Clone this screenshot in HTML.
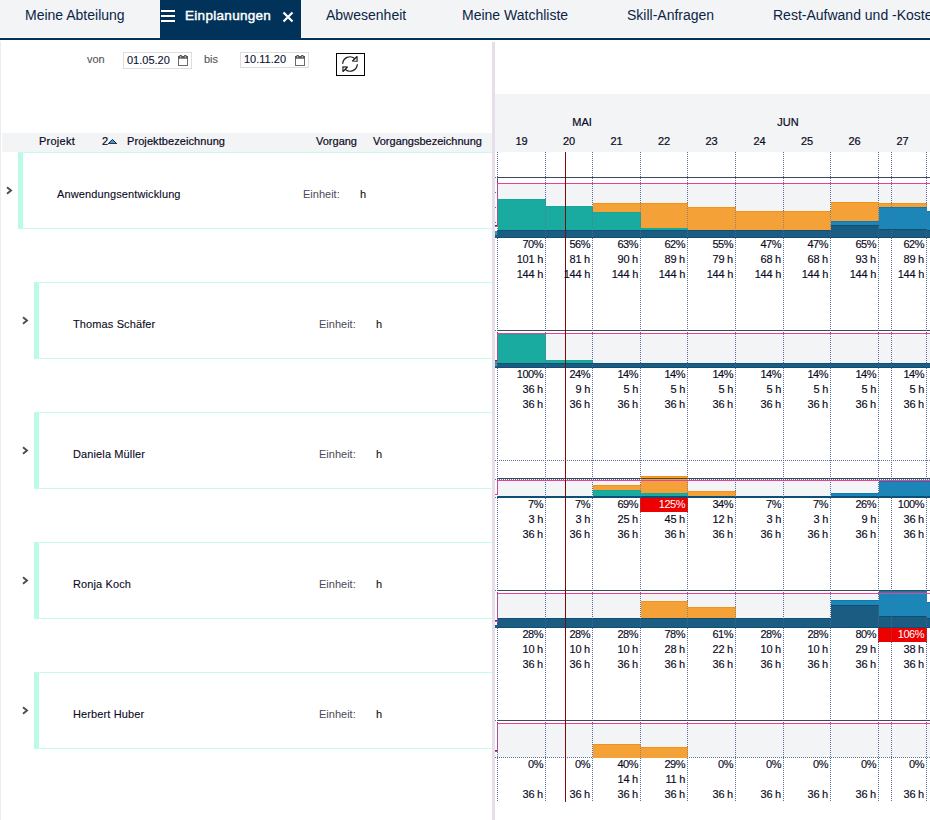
<!DOCTYPE html>
<html lang="de"><head><meta charset="utf-8"><title>Einplanungen</title>
<style>
html,body{margin:0;padding:0;}
body{width:930px;height:820px;overflow:hidden;background:#fff;position:relative;font-family:"Liberation Sans",Arial,sans-serif;font-size:11px;color:#1a1a2e;}
.abs{position:absolute;}
.tab{position:absolute;top:0;height:38px;line-height:31px;font-size:14px;color:#0b2545;white-space:nowrap;}
.t{position:absolute;white-space:nowrap;line-height:15px;height:15px;color:#0a0a1e;-webkit-text-stroke:0.1px;}
.num{position:absolute;text-align:right;white-space:nowrap;line-height:15px;height:15px;width:46px;color:#0a0a1e;letter-spacing:-0.25px;-webkit-text-stroke:0.15px;}
.hd{position:absolute;white-space:nowrap;line-height:15px;color:#0a0a1e;-webkit-text-stroke:0.2px;}
</style></head><body>

<div class="abs" style="left:0;top:0;width:930px;height:37px;background:#f3f4f6"></div>
<div class="abs" style="left:0;top:38px;width:930px;height:2px;background:#00325a"></div>
<div class="abs" style="left:160px;top:0;width:141px;height:40px;background:#00325a"></div>
<div class="tab" style="left:25px">Meine Abteilung</div>
<div class="abs" style="left:161px;top:10px;width:14px;height:2px;background:#fff"></div>
<div class="abs" style="left:161px;top:15px;width:14px;height:2px;background:#fff"></div>
<div class="abs" style="left:161px;top:20px;width:14px;height:2px;background:#fff"></div>
<div class="tab" style="left:185px;color:#fff;font-size:13.5px;-webkit-text-stroke:0.45px #fff;letter-spacing:0.3px;">Einplanungen</div>
<svg class="abs" style="left:282px;top:11px" width="12" height="12" viewBox="0 0 12 12"><path d="M1.5 1.5 L10.5 10.5 M10.5 1.5 L1.5 10.5" stroke="#fff" stroke-width="2.2" fill="none"/></svg>
<div class="tab" style="left:326px">Abwesenheit</div>
<div class="tab" style="left:462px">Meine Watchliste</div>
<div class="tab" style="left:627px">Skill-Anfragen</div>
<div class="tab" style="left:773px">Rest-Aufwand und -Kosten</div>
<div class="abs" style="left:0;top:41px;width:1px;height:779px;background:#ededed"></div>
<div class="t" style="left:87px;top:52px;color:#555">von</div>
<div class="abs" style="left:123px;top:52px;width:67px;height:15px;border:1px solid #ddd;background:#fff"></div>
<div class="t" style="left:127px;top:53px;color:#0b1030">01.05.20</div>
<div class="t" style="left:204px;top:52px;color:#555">bis</div>
<div class="abs" style="left:240px;top:52px;width:67px;height:14px;border:1px solid #ddd;background:#fff"></div>
<div class="t" style="left:244px;top:52px;color:#0b1030">10.11.20</div>
<svg class="abs" style="left:178px;top:55px" width="11" height="11" viewBox="0 0 11 11"><rect x="0.5" y="1.5" width="9" height="9" fill="#fff" stroke="#6a6a6a" stroke-width="1"/><rect x="0" y="1" width="10" height="2.7" fill="#555"/><rect x="1.4" y="0" width="2.6" height="1.4" rx="0.6" fill="#555"/><rect x="6" y="0" width="2.6" height="1.4" rx="0.6" fill="#555"/><rect x="2.2" y="1" width="1" height="1.7" fill="#bcd"/><rect x="6.8" y="1" width="1" height="1.7" fill="#bcd"/></svg>
<svg class="abs" style="left:295px;top:55px" width="11" height="11" viewBox="0 0 11 11"><rect x="0.5" y="1.5" width="9" height="9" fill="#fff" stroke="#6a6a6a" stroke-width="1"/><rect x="0" y="1" width="10" height="2.7" fill="#555"/><rect x="1.4" y="0" width="2.6" height="1.4" rx="0.6" fill="#555"/><rect x="6" y="0" width="2.6" height="1.4" rx="0.6" fill="#555"/><rect x="2.2" y="1" width="1" height="1.7" fill="#bcd"/><rect x="6.8" y="1" width="1" height="1.7" fill="#bcd"/></svg>
<div class="abs" style="left:336px;top:53px;width:27px;height:21px;border:1px solid #000;background:#fff"></div>
<svg class="abs" style="left:342px;top:56px" width="16" height="16" viewBox="0 0 16 16" fill="none" stroke="#1c1c1c" stroke-width="1.15" stroke-linecap="round" stroke-linejoin="round"><path d="M0.7 7.4 A7.3 7.3 0 0 1 12.6 2.5"/><path d="M15.3 8.6 A7.3 7.3 0 0 1 3.4 13.5"/><path d="M15 0.5 L15.1 5.3 L10.5 5 Z" fill="#fff"/><path d="M1 15.5 L0.9 10.7 L5.5 11 Z" fill="#fff"/></svg>
<div class="abs" style="left:2px;top:133px;width:490px;height:19px;background:#f3f4f6"></div>
<div class="hd" style="left:39px;top:134px;letter-spacing:0.25px">Projekt</div>
<div class="hd" style="left:102px;top:134px;letter-spacing:0px">2</div>
<div class="hd" style="left:127px;top:134px;letter-spacing:0.08px">Projektbezeichnung</div>
<div class="hd" style="left:316px;top:134px;letter-spacing:0px">Vorgang</div>
<div class="hd" style="left:373px;top:134px;letter-spacing:0px">Vorgangsbezeichnung</div>
<svg class="abs" style="left:108px;top:139px" width="9" height="5" viewBox="0 0 9 5"><path d="M0.3 4.7 L4.5 0.4 L8.7 4.7 Z" fill="#3b9ade" stroke="#111" stroke-width="0.9"/></svg>
<div class="abs" style="left:495px;top:94px;width:435px;height:58px;background:#f3f4f6"></div>
<div class="hd" style="left:552px;top:115px;width:60px;text-align:center">MAI</div>
<div class="hd" style="left:758px;top:115px;width:60px;text-align:center">JUN</div>
<div class="hd" style="left:501.0px;top:134px;width:41px;text-align:center">19</div>
<div class="hd" style="left:548.5px;top:134px;width:41px;text-align:center">20</div>
<div class="hd" style="left:596.0px;top:134px;width:41px;text-align:center">21</div>
<div class="hd" style="left:643.5px;top:134px;width:41px;text-align:center">22</div>
<div class="hd" style="left:691.0px;top:134px;width:41px;text-align:center">23</div>
<div class="hd" style="left:739.0px;top:134px;width:41px;text-align:center">24</div>
<div class="hd" style="left:786.5px;top:134px;width:41px;text-align:center">25</div>
<div class="hd" style="left:834.0px;top:134px;width:41px;text-align:center">26</div>
<div class="hd" style="left:882.0px;top:134px;width:41px;text-align:center">27</div>
<div class="abs" style="left:492px;top:42px;width:3px;height:778px;background:#e6dfe9"></div>
<div class="abs" style="left:18px;top:152px;width:469px;height:75px;border-left:5px solid #b9fbe6;border-top:1px solid #c6fbeb;border-bottom:1px solid #c6fbeb;background:#fff"></div>
<svg class="abs" style="left:6px;top:186px" width="7" height="9" viewBox="0 0 7 9"><path d="M1 1.3 L5 4.5 L1 7.7" stroke="#4d4d4d" stroke-width="1.9" fill="none"/></svg>
<div class="t" style="left:57px;top:187px;letter-spacing:0.12px">Anwendungsentwicklung</div>
<div class="t" style="left:303px;top:187px;color:#4a4a58;-webkit-text-stroke:0">Einheit:</div>
<div class="t" style="left:360px;top:187px;color:#111">h</div>
<div class="abs" style="left:34px;top:282px;width:453px;height:75px;border-left:5px solid #b9fbe6;border-top:1px solid #c6fbeb;border-bottom:1px solid #c6fbeb;background:#fff"></div>
<svg class="abs" style="left:22px;top:316px" width="7" height="9" viewBox="0 0 7 9"><path d="M1 1.3 L5 4.5 L1 7.7" stroke="#4d4d4d" stroke-width="1.9" fill="none"/></svg>
<div class="t" style="left:73px;top:317px;letter-spacing:0.12px">Thomas Schäfer</div>
<div class="t" style="left:319px;top:317px;color:#4a4a58;-webkit-text-stroke:0">Einheit:</div>
<div class="t" style="left:376px;top:317px;color:#111">h</div>
<div class="abs" style="left:34px;top:412px;width:453px;height:75px;border-left:5px solid #b9fbe6;border-top:1px solid #c6fbeb;border-bottom:1px solid #c6fbeb;background:#fff"></div>
<svg class="abs" style="left:22px;top:446px" width="7" height="9" viewBox="0 0 7 9"><path d="M1 1.3 L5 4.5 L1 7.7" stroke="#4d4d4d" stroke-width="1.9" fill="none"/></svg>
<div class="t" style="left:73px;top:447px;letter-spacing:0.12px">Daniela Müller</div>
<div class="t" style="left:319px;top:447px;color:#4a4a58;-webkit-text-stroke:0">Einheit:</div>
<div class="t" style="left:376px;top:447px;color:#111">h</div>
<div class="abs" style="left:34px;top:542px;width:453px;height:75px;border-left:5px solid #b9fbe6;border-top:1px solid #c6fbeb;border-bottom:1px solid #c6fbeb;background:#fff"></div>
<svg class="abs" style="left:22px;top:576px" width="7" height="9" viewBox="0 0 7 9"><path d="M1 1.3 L5 4.5 L1 7.7" stroke="#4d4d4d" stroke-width="1.9" fill="none"/></svg>
<div class="t" style="left:73px;top:577px;letter-spacing:0.12px">Ronja Koch</div>
<div class="t" style="left:319px;top:577px;color:#4a4a58;-webkit-text-stroke:0">Einheit:</div>
<div class="t" style="left:376px;top:577px;color:#111">h</div>
<div class="abs" style="left:34px;top:672px;width:453px;height:75px;border-left:5px solid #b9fbe6;border-top:1px solid #c6fbeb;border-bottom:1px solid #c6fbeb;background:#fff"></div>
<svg class="abs" style="left:22px;top:706px" width="7" height="9" viewBox="0 0 7 9"><path d="M1 1.3 L5 4.5 L1 7.7" stroke="#4d4d4d" stroke-width="1.9" fill="none"/></svg>
<div class="t" style="left:73px;top:707px;letter-spacing:0.12px">Herbert Huber</div>
<div class="t" style="left:319px;top:707px;color:#4a4a58;-webkit-text-stroke:0">Einheit:</div>
<div class="t" style="left:376px;top:707px;color:#111">h</div>
<svg class="abs" style="left:0;top:0" width="930" height="820" viewBox="0 0 930 820" shape-rendering="crispEdges"><rect x="497" y="184" width="430" height="46" fill="#f3f4f6"/><rect x="497" y="334" width="433" height="29" fill="#f3f4f6"/><rect x="497" y="481" width="433" height="15" fill="#f3f4f6"/><rect x="497" y="594" width="430" height="24" fill="#f3f4f6"/><rect x="497" y="724" width="433" height="33" fill="#f3f4f6"/><path d="M495 460.5 H930 M497 479.5 H930 M495 757.5 H930" stroke="#5c6b98" stroke-width="1" stroke-dasharray="1 1" fill="none"/><path d="M497.5 152 V802 M545.5 152 V802 M592.5 152 V802 M640.5 152 V802 M687.5 152 V802 M735.5 152 V802 M783.5 152 V802 M830.5 152 V802 M878.5 152 V802 M926.5 152 V802 M891.5 152 V802" stroke="#5c6b98" stroke-width="1" stroke-dasharray="1 1" fill="none"/><rect x="498" y="199" width="48" height="31" fill="#1aaba0"/><rect x="498" y="199" width="48" height="1" fill="#18a69b"/><rect x="497" y="230" width="49" height="8" fill="#1a5c82"/><rect x="497" y="230" width="49" height="1" fill="#0f4e75"/><rect x="497" y="237" width="49" height="1" fill="#0f4e75"/><rect x="546" y="206" width="47" height="24" fill="#1aaba0"/><rect x="546" y="206" width="47" height="1" fill="#18a69b"/><rect x="546" y="230" width="47" height="8" fill="#1a5c82"/><rect x="546" y="230" width="47" height="1" fill="#0f4e75"/><rect x="546" y="237" width="47" height="1" fill="#0f4e75"/><rect x="593" y="203" width="48" height="9" fill="#f4a138"/><rect x="593" y="203" width="48" height="1" fill="#f0931d"/><rect x="593" y="212" width="48" height="18" fill="#1aaba0"/><rect x="593" y="212" width="48" height="1" fill="#18a69b"/><rect x="593" y="230" width="48" height="8" fill="#1a5c82"/><rect x="593" y="230" width="48" height="1" fill="#0f4e75"/><rect x="593" y="237" width="48" height="1" fill="#0f4e75"/><rect x="641" y="203" width="47" height="25" fill="#f4a138"/><rect x="641" y="203" width="47" height="1" fill="#f0931d"/><rect x="641" y="228" width="47" height="2" fill="#1aaba0"/><rect x="641" y="228" width="47" height="1" fill="#18a69b"/><rect x="641" y="230" width="47" height="8" fill="#1a5c82"/><rect x="641" y="230" width="47" height="1" fill="#0f4e75"/><rect x="641" y="237" width="47" height="1" fill="#0f4e75"/><rect x="688" y="207" width="48" height="23" fill="#f4a138"/><rect x="688" y="207" width="48" height="1" fill="#f0931d"/><rect x="688" y="230" width="48" height="8" fill="#1a5c82"/><rect x="688" y="230" width="48" height="1" fill="#0f4e75"/><rect x="688" y="237" width="48" height="1" fill="#0f4e75"/><rect x="736" y="211" width="48" height="19" fill="#f4a138"/><rect x="736" y="211" width="48" height="1" fill="#f0931d"/><rect x="736" y="230" width="48" height="8" fill="#1a5c82"/><rect x="736" y="230" width="48" height="1" fill="#0f4e75"/><rect x="736" y="237" width="48" height="1" fill="#0f4e75"/><rect x="784" y="211" width="47" height="19" fill="#f4a138"/><rect x="784" y="211" width="47" height="1" fill="#f0931d"/><rect x="784" y="230" width="47" height="8" fill="#1a5c82"/><rect x="784" y="230" width="47" height="1" fill="#0f4e75"/><rect x="784" y="237" width="47" height="1" fill="#0f4e75"/><rect x="831" y="202" width="48" height="19" fill="#f4a138"/><rect x="831" y="202" width="48" height="1" fill="#f0931d"/><rect x="831" y="221" width="48" height="4" fill="#1d86b8"/><rect x="831" y="221" width="48" height="1" fill="#1278ae"/><rect x="831" y="225" width="48" height="13" fill="#1a5c82"/><rect x="831" y="225" width="48" height="1" fill="#0f4e75"/><rect x="831" y="237" width="48" height="1" fill="#0f4e75"/><rect x="879" y="203" width="48" height="4" fill="#f4a138"/><rect x="879" y="203" width="48" height="1" fill="#f0931d"/><rect x="879" y="207" width="48" height="22" fill="#1d86b8"/><rect x="879" y="207" width="48" height="1" fill="#1278ae"/><rect x="879" y="229" width="48" height="9" fill="#1a5c82"/><rect x="879" y="229" width="48" height="1" fill="#0f4e75"/><rect x="879" y="237" width="48" height="1" fill="#0f4e75"/><rect x="927" y="211" width="3" height="19" fill="#1d86b8"/><rect x="927" y="211" width="3" height="1" fill="#1278ae"/><rect x="927" y="230" width="3" height="8" fill="#1a5c82"/><rect x="927" y="230" width="3" height="1" fill="#0f4e75"/><rect x="927" y="237" width="3" height="1" fill="#0f4e75"/><rect x="497" y="177" width="433" height="1" fill="#3c4854"/><rect x="497" y="183" width="433" height="1" fill="#ec3f97"/><rect x="498" y="334" width="48" height="29" fill="#1aaba0"/><rect x="498" y="334" width="48" height="1" fill="#18a69b"/><rect x="497" y="363" width="49" height="5" fill="#1a5c82"/><rect x="497" y="363" width="49" height="1" fill="#0f4e75"/><rect x="497" y="367" width="49" height="1" fill="#0f4e75"/><rect x="546" y="360" width="47" height="3" fill="#1aaba0"/><rect x="546" y="360" width="47" height="1" fill="#18a69b"/><rect x="546" y="363" width="47" height="5" fill="#1a5c82"/><rect x="546" y="363" width="47" height="1" fill="#0f4e75"/><rect x="546" y="367" width="47" height="1" fill="#0f4e75"/><rect x="593" y="363" width="48" height="5" fill="#1a5c82"/><rect x="593" y="363" width="48" height="1" fill="#0f4e75"/><rect x="593" y="367" width="48" height="1" fill="#0f4e75"/><rect x="641" y="363" width="47" height="5" fill="#1a5c82"/><rect x="641" y="363" width="47" height="1" fill="#0f4e75"/><rect x="641" y="367" width="47" height="1" fill="#0f4e75"/><rect x="688" y="363" width="48" height="5" fill="#1a5c82"/><rect x="688" y="363" width="48" height="1" fill="#0f4e75"/><rect x="688" y="367" width="48" height="1" fill="#0f4e75"/><rect x="736" y="363" width="48" height="5" fill="#1a5c82"/><rect x="736" y="363" width="48" height="1" fill="#0f4e75"/><rect x="736" y="367" width="48" height="1" fill="#0f4e75"/><rect x="784" y="363" width="47" height="5" fill="#1a5c82"/><rect x="784" y="363" width="47" height="1" fill="#0f4e75"/><rect x="784" y="367" width="47" height="1" fill="#0f4e75"/><rect x="831" y="363" width="48" height="5" fill="#1a5c82"/><rect x="831" y="363" width="48" height="1" fill="#0f4e75"/><rect x="831" y="367" width="48" height="1" fill="#0f4e75"/><rect x="879" y="363" width="48" height="5" fill="#1a5c82"/><rect x="879" y="363" width="48" height="1" fill="#0f4e75"/><rect x="879" y="367" width="48" height="1" fill="#0f4e75"/><rect x="927" y="363" width="3" height="5" fill="#1a5c82"/><rect x="927" y="363" width="3" height="1" fill="#0f4e75"/><rect x="927" y="367" width="3" height="1" fill="#0f4e75"/><rect x="497" y="330" width="433" height="1" fill="#3c4854"/><rect x="497" y="333" width="433" height="1" fill="#ec3f97"/><rect x="497" y="496" width="49" height="2" fill="#1a5c82"/><rect x="497" y="496" width="49" height="1" fill="#0f4e75"/><rect x="497" y="497" width="49" height="1" fill="#0f4e75"/><rect x="546" y="496" width="47" height="2" fill="#1a5c82"/><rect x="546" y="496" width="47" height="1" fill="#0f4e75"/><rect x="546" y="497" width="47" height="1" fill="#0f4e75"/><rect x="593" y="485" width="48" height="5" fill="#f4a138"/><rect x="593" y="485" width="48" height="1" fill="#f0931d"/><rect x="593" y="490" width="48" height="6" fill="#1aaba0"/><rect x="593" y="490" width="48" height="1" fill="#18a69b"/><rect x="593" y="496" width="48" height="2" fill="#1a5c82"/><rect x="593" y="496" width="48" height="1" fill="#0f4e75"/><rect x="593" y="497" width="48" height="1" fill="#0f4e75"/><rect x="641" y="476" width="47" height="17" fill="#f4a138"/><rect x="641" y="476" width="47" height="1" fill="#f0931d"/><rect x="641" y="493" width="47" height="3" fill="#1aaba0"/><rect x="641" y="493" width="47" height="1" fill="#18a69b"/><rect x="641" y="496" width="47" height="2" fill="#1a5c82"/><rect x="641" y="496" width="47" height="1" fill="#0f4e75"/><rect x="641" y="497" width="47" height="1" fill="#0f4e75"/><rect x="688" y="491" width="48" height="5" fill="#f4a138"/><rect x="688" y="491" width="48" height="1" fill="#f0931d"/><rect x="688" y="496" width="48" height="2" fill="#1a5c82"/><rect x="688" y="496" width="48" height="1" fill="#0f4e75"/><rect x="688" y="497" width="48" height="1" fill="#0f4e75"/><rect x="736" y="496" width="48" height="2" fill="#1a5c82"/><rect x="736" y="496" width="48" height="1" fill="#0f4e75"/><rect x="736" y="497" width="48" height="1" fill="#0f4e75"/><rect x="784" y="496" width="47" height="2" fill="#1a5c82"/><rect x="784" y="496" width="47" height="1" fill="#0f4e75"/><rect x="784" y="497" width="47" height="1" fill="#0f4e75"/><rect x="831" y="493" width="48" height="3" fill="#1d86b8"/><rect x="831" y="493" width="48" height="1" fill="#1278ae"/><rect x="831" y="496" width="48" height="2" fill="#1a5c82"/><rect x="831" y="496" width="48" height="1" fill="#0f4e75"/><rect x="831" y="497" width="48" height="1" fill="#0f4e75"/><rect x="879" y="481" width="48" height="15" fill="#1d86b8"/><rect x="879" y="481" width="48" height="1" fill="#1278ae"/><rect x="879" y="496" width="48" height="2" fill="#1a5c82"/><rect x="879" y="496" width="48" height="1" fill="#0f4e75"/><rect x="879" y="497" width="48" height="1" fill="#0f4e75"/><rect x="927" y="481" width="3" height="15" fill="#1d86b8"/><rect x="927" y="481" width="3" height="1" fill="#1278ae"/><rect x="927" y="496" width="3" height="2" fill="#1a5c82"/><rect x="927" y="496" width="3" height="1" fill="#0f4e75"/><rect x="927" y="497" width="3" height="1" fill="#0f4e75"/><rect x="497" y="478" width="433" height="1" fill="#3c4854"/><rect x="497" y="480" width="433" height="1" fill="#ec3f97"/><rect x="640" y="498" width="48" height="14" fill="#ec0000"/><rect x="497" y="618" width="49" height="10" fill="#1a5c82"/><rect x="497" y="618" width="49" height="1" fill="#0f4e75"/><rect x="497" y="627" width="49" height="1" fill="#0f4e75"/><rect x="546" y="618" width="47" height="10" fill="#1a5c82"/><rect x="546" y="618" width="47" height="1" fill="#0f4e75"/><rect x="546" y="627" width="47" height="1" fill="#0f4e75"/><rect x="593" y="618" width="48" height="10" fill="#1a5c82"/><rect x="593" y="618" width="48" height="1" fill="#0f4e75"/><rect x="593" y="627" width="48" height="1" fill="#0f4e75"/><rect x="641" y="601" width="47" height="17" fill="#f4a138"/><rect x="641" y="601" width="47" height="1" fill="#f0931d"/><rect x="641" y="618" width="47" height="10" fill="#1a5c82"/><rect x="641" y="618" width="47" height="1" fill="#0f4e75"/><rect x="641" y="627" width="47" height="1" fill="#0f4e75"/><rect x="688" y="607" width="48" height="11" fill="#f4a138"/><rect x="688" y="607" width="48" height="1" fill="#f0931d"/><rect x="688" y="618" width="48" height="10" fill="#1a5c82"/><rect x="688" y="618" width="48" height="1" fill="#0f4e75"/><rect x="688" y="627" width="48" height="1" fill="#0f4e75"/><rect x="736" y="618" width="48" height="10" fill="#1a5c82"/><rect x="736" y="618" width="48" height="1" fill="#0f4e75"/><rect x="736" y="627" width="48" height="1" fill="#0f4e75"/><rect x="784" y="618" width="47" height="10" fill="#1a5c82"/><rect x="784" y="618" width="47" height="1" fill="#0f4e75"/><rect x="784" y="627" width="47" height="1" fill="#0f4e75"/><rect x="831" y="600" width="48" height="5" fill="#1d86b8"/><rect x="831" y="600" width="48" height="1" fill="#1278ae"/><rect x="831" y="605" width="48" height="23" fill="#1a5c82"/><rect x="831" y="605" width="48" height="1" fill="#0f4e75"/><rect x="831" y="627" width="48" height="1" fill="#0f4e75"/><rect x="879" y="591" width="48" height="25" fill="#1d86b8"/><rect x="879" y="591" width="48" height="1" fill="#1278ae"/><rect x="879" y="616" width="48" height="12" fill="#1a5c82"/><rect x="879" y="616" width="48" height="1" fill="#0f4e75"/><rect x="879" y="627" width="48" height="1" fill="#0f4e75"/><rect x="927" y="602" width="3" height="16" fill="#1d86b8"/><rect x="927" y="602" width="3" height="1" fill="#1278ae"/><rect x="927" y="618" width="3" height="10" fill="#1a5c82"/><rect x="927" y="618" width="3" height="1" fill="#0f4e75"/><rect x="927" y="627" width="3" height="1" fill="#0f4e75"/><rect x="497" y="590" width="433" height="1" fill="#3c4854"/><rect x="497" y="593" width="433" height="1" fill="#ec3f97"/><rect x="878" y="628" width="49" height="14" fill="#ec0000"/><rect x="593" y="744" width="48" height="14" fill="#f4a138"/><rect x="593" y="744" width="48" height="1" fill="#f0931d"/><rect x="641" y="747" width="47" height="11" fill="#f4a138"/><rect x="641" y="747" width="47" height="1" fill="#f0931d"/><rect x="497" y="720" width="433" height="1" fill="#3c4854"/><rect x="497" y="723" width="433" height="1" fill="#ec3f97"/><rect x="495" y="177" width="1" height="1" fill="#5c6b98"/><rect x="495" y="192" width="1" height="1" fill="#5c6b98"/><rect x="495" y="207" width="1" height="1" fill="#5c6b98"/><rect x="495" y="222" width="1" height="1" fill="#5c6b98"/><path d="M497.5 177 V183" stroke="#3c4854" stroke-width="1" stroke-dasharray="1 1" fill="none"/><path d="M497.5 183 V226" stroke="#ec3f97" stroke-width="1" stroke-dasharray="1 1" fill="none"/><rect x="495" y="225" width="2" height="1" fill="#3c4854"/><rect x="495" y="226" width="3" height="1" fill="#ec3f97"/><rect x="495" y="231" width="2" height="4" fill="#1aaba0"/><rect x="495" y="235" width="2" height="3" fill="#1a5c82"/><rect x="495" y="330" width="1" height="1" fill="#5c6b98"/><path d="M497.5 330 V333" stroke="#3c4854" stroke-width="1" stroke-dasharray="1 1" fill="none"/><path d="M497.5 333 V361" stroke="#ec3f97" stroke-width="1" stroke-dasharray="1 1" fill="none"/><rect x="495" y="360" width="2" height="1" fill="#3c4854"/><rect x="495" y="361" width="3" height="1" fill="#ec3f97"/><rect x="495" y="362" width="2" height="4" fill="#1aaba0"/><rect x="495" y="366" width="2" height="2" fill="#1a5c82"/><rect x="495" y="479" width="1" height="1" fill="#5c6b98"/><rect x="495" y="497" width="1" height="1" fill="#5c6b98"/><path d="M497.5 478 V480" stroke="#3c4854" stroke-width="1" stroke-dasharray="1 1" fill="none"/><rect x="497" y="480" width="1" height="15" fill="#ec3f97"/><rect x="495" y="494" width="3" height="1" fill="#ec3f97"/><rect x="495" y="590" width="1" height="1" fill="#5c6b98"/><path d="M497.5 590 V593" stroke="#3c4854" stroke-width="1" stroke-dasharray="1 1" fill="none"/><path d="M497.5 593 V621" stroke="#ec3f97" stroke-width="1" stroke-dasharray="1 1" fill="none"/><rect x="495" y="620" width="2" height="1" fill="#3c4854"/><rect x="495" y="621" width="3" height="1" fill="#ec3f97"/><rect x="495" y="625" width="2" height="3" fill="#1a5c82"/><rect x="495" y="720" width="1" height="1" fill="#5c6b98"/><path d="M497.5 720 V723" stroke="#3c4854" stroke-width="1" stroke-dasharray="1 1" fill="none"/><path d="M497.5 723 V751" stroke="#ec3f97" stroke-width="1" stroke-dasharray="1 1" fill="none"/><rect x="495" y="750" width="2" height="1" fill="#3c4854"/><rect x="495" y="751" width="3" height="1" fill="#ec3f97"/><path d="M497.5 152 V802 M545.5 152 V802 M592.5 152 V802 M640.5 152 V802 M687.5 152 V802 M735.5 152 V802 M783.5 152 V802 M830.5 152 V802 M878.5 152 V802 M926.5 152 V802 M891.5 152 V802" stroke="#5c6b98" stroke-width="1" stroke-dasharray="1 1" fill="none" opacity="0.6"/><rect x="565" y="152" width="1" height="650" fill="#7b0a0a"/></svg>
<div class="num" style="left:497px;top:237px;color:#0a0a1e;letter-spacing:-0.5px">70%</div>
<div class="num" style="left:497px;top:252px;color:#0a0a1e">101 h</div>
<div class="num" style="left:497px;top:267px;color:#0a0a1e">144 h</div>
<div class="num" style="left:544px;top:237px;color:#0a0a1e;letter-spacing:-0.5px">56%</div>
<div class="num" style="left:544px;top:252px;color:#0a0a1e">81 h</div>
<div class="num" style="left:544px;top:267px;color:#0a0a1e">144 h</div>
<div class="num" style="left:592px;top:237px;color:#0a0a1e;letter-spacing:-0.5px">63%</div>
<div class="num" style="left:592px;top:252px;color:#0a0a1e">90 h</div>
<div class="num" style="left:592px;top:267px;color:#0a0a1e">144 h</div>
<div class="num" style="left:639px;top:237px;color:#0a0a1e;letter-spacing:-0.5px">62%</div>
<div class="num" style="left:639px;top:252px;color:#0a0a1e">89 h</div>
<div class="num" style="left:639px;top:267px;color:#0a0a1e">144 h</div>
<div class="num" style="left:687px;top:237px;color:#0a0a1e;letter-spacing:-0.5px">55%</div>
<div class="num" style="left:687px;top:252px;color:#0a0a1e">79 h</div>
<div class="num" style="left:687px;top:267px;color:#0a0a1e">144 h</div>
<div class="num" style="left:735px;top:237px;color:#0a0a1e;letter-spacing:-0.5px">47%</div>
<div class="num" style="left:735px;top:252px;color:#0a0a1e">68 h</div>
<div class="num" style="left:735px;top:267px;color:#0a0a1e">144 h</div>
<div class="num" style="left:782px;top:237px;color:#0a0a1e;letter-spacing:-0.5px">47%</div>
<div class="num" style="left:782px;top:252px;color:#0a0a1e">68 h</div>
<div class="num" style="left:782px;top:267px;color:#0a0a1e">144 h</div>
<div class="num" style="left:830px;top:237px;color:#0a0a1e;letter-spacing:-0.5px">65%</div>
<div class="num" style="left:830px;top:252px;color:#0a0a1e">93 h</div>
<div class="num" style="left:830px;top:267px;color:#0a0a1e">144 h</div>
<div class="num" style="left:878px;top:237px;color:#0a0a1e;letter-spacing:-0.5px">62%</div>
<div class="num" style="left:878px;top:252px;color:#0a0a1e">89 h</div>
<div class="num" style="left:878px;top:267px;color:#0a0a1e">144 h</div>
<div class="num" style="left:497px;top:367px;color:#0a0a1e;letter-spacing:-0.5px">100%</div>
<div class="num" style="left:497px;top:382px;color:#0a0a1e">36 h</div>
<div class="num" style="left:497px;top:397px;color:#0a0a1e">36 h</div>
<div class="num" style="left:544px;top:367px;color:#0a0a1e;letter-spacing:-0.5px">24%</div>
<div class="num" style="left:544px;top:382px;color:#0a0a1e">9 h</div>
<div class="num" style="left:544px;top:397px;color:#0a0a1e">36 h</div>
<div class="num" style="left:592px;top:367px;color:#0a0a1e;letter-spacing:-0.5px">14%</div>
<div class="num" style="left:592px;top:382px;color:#0a0a1e">5 h</div>
<div class="num" style="left:592px;top:397px;color:#0a0a1e">36 h</div>
<div class="num" style="left:639px;top:367px;color:#0a0a1e;letter-spacing:-0.5px">14%</div>
<div class="num" style="left:639px;top:382px;color:#0a0a1e">5 h</div>
<div class="num" style="left:639px;top:397px;color:#0a0a1e">36 h</div>
<div class="num" style="left:687px;top:367px;color:#0a0a1e;letter-spacing:-0.5px">14%</div>
<div class="num" style="left:687px;top:382px;color:#0a0a1e">5 h</div>
<div class="num" style="left:687px;top:397px;color:#0a0a1e">36 h</div>
<div class="num" style="left:735px;top:367px;color:#0a0a1e;letter-spacing:-0.5px">14%</div>
<div class="num" style="left:735px;top:382px;color:#0a0a1e">5 h</div>
<div class="num" style="left:735px;top:397px;color:#0a0a1e">36 h</div>
<div class="num" style="left:782px;top:367px;color:#0a0a1e;letter-spacing:-0.5px">14%</div>
<div class="num" style="left:782px;top:382px;color:#0a0a1e">5 h</div>
<div class="num" style="left:782px;top:397px;color:#0a0a1e">36 h</div>
<div class="num" style="left:830px;top:367px;color:#0a0a1e;letter-spacing:-0.5px">14%</div>
<div class="num" style="left:830px;top:382px;color:#0a0a1e">5 h</div>
<div class="num" style="left:830px;top:397px;color:#0a0a1e">36 h</div>
<div class="num" style="left:878px;top:367px;color:#0a0a1e;letter-spacing:-0.5px">14%</div>
<div class="num" style="left:878px;top:382px;color:#0a0a1e">5 h</div>
<div class="num" style="left:878px;top:397px;color:#0a0a1e">36 h</div>
<div class="num" style="left:497px;top:497px;color:#0a0a1e;letter-spacing:-0.5px">7%</div>
<div class="num" style="left:497px;top:512px;color:#0a0a1e">3 h</div>
<div class="num" style="left:497px;top:527px;color:#0a0a1e">36 h</div>
<div class="num" style="left:544px;top:497px;color:#0a0a1e;letter-spacing:-0.5px">7%</div>
<div class="num" style="left:544px;top:512px;color:#0a0a1e">3 h</div>
<div class="num" style="left:544px;top:527px;color:#0a0a1e">36 h</div>
<div class="num" style="left:592px;top:497px;color:#0a0a1e;letter-spacing:-0.5px">69%</div>
<div class="num" style="left:592px;top:512px;color:#0a0a1e">25 h</div>
<div class="num" style="left:592px;top:527px;color:#0a0a1e">36 h</div>
<div class="num" style="left:639px;top:497px;color:#fff;letter-spacing:-0.5px;-webkit-text-stroke:0">125%</div>
<div class="num" style="left:639px;top:512px;color:#0a0a1e">45 h</div>
<div class="num" style="left:639px;top:527px;color:#0a0a1e">36 h</div>
<div class="num" style="left:687px;top:497px;color:#0a0a1e;letter-spacing:-0.5px">34%</div>
<div class="num" style="left:687px;top:512px;color:#0a0a1e">12 h</div>
<div class="num" style="left:687px;top:527px;color:#0a0a1e">36 h</div>
<div class="num" style="left:735px;top:497px;color:#0a0a1e;letter-spacing:-0.5px">7%</div>
<div class="num" style="left:735px;top:512px;color:#0a0a1e">3 h</div>
<div class="num" style="left:735px;top:527px;color:#0a0a1e">36 h</div>
<div class="num" style="left:782px;top:497px;color:#0a0a1e;letter-spacing:-0.5px">7%</div>
<div class="num" style="left:782px;top:512px;color:#0a0a1e">3 h</div>
<div class="num" style="left:782px;top:527px;color:#0a0a1e">36 h</div>
<div class="num" style="left:830px;top:497px;color:#0a0a1e;letter-spacing:-0.5px">26%</div>
<div class="num" style="left:830px;top:512px;color:#0a0a1e">9 h</div>
<div class="num" style="left:830px;top:527px;color:#0a0a1e">36 h</div>
<div class="num" style="left:878px;top:497px;color:#0a0a1e;letter-spacing:-0.5px">100%</div>
<div class="num" style="left:878px;top:512px;color:#0a0a1e">36 h</div>
<div class="num" style="left:878px;top:527px;color:#0a0a1e">36 h</div>
<div class="num" style="left:497px;top:627px;color:#0a0a1e;letter-spacing:-0.5px">28%</div>
<div class="num" style="left:497px;top:642px;color:#0a0a1e">10 h</div>
<div class="num" style="left:497px;top:657px;color:#0a0a1e">36 h</div>
<div class="num" style="left:544px;top:627px;color:#0a0a1e;letter-spacing:-0.5px">28%</div>
<div class="num" style="left:544px;top:642px;color:#0a0a1e">10 h</div>
<div class="num" style="left:544px;top:657px;color:#0a0a1e">36 h</div>
<div class="num" style="left:592px;top:627px;color:#0a0a1e;letter-spacing:-0.5px">28%</div>
<div class="num" style="left:592px;top:642px;color:#0a0a1e">10 h</div>
<div class="num" style="left:592px;top:657px;color:#0a0a1e">36 h</div>
<div class="num" style="left:639px;top:627px;color:#0a0a1e;letter-spacing:-0.5px">78%</div>
<div class="num" style="left:639px;top:642px;color:#0a0a1e">28 h</div>
<div class="num" style="left:639px;top:657px;color:#0a0a1e">36 h</div>
<div class="num" style="left:687px;top:627px;color:#0a0a1e;letter-spacing:-0.5px">61%</div>
<div class="num" style="left:687px;top:642px;color:#0a0a1e">22 h</div>
<div class="num" style="left:687px;top:657px;color:#0a0a1e">36 h</div>
<div class="num" style="left:735px;top:627px;color:#0a0a1e;letter-spacing:-0.5px">28%</div>
<div class="num" style="left:735px;top:642px;color:#0a0a1e">10 h</div>
<div class="num" style="left:735px;top:657px;color:#0a0a1e">36 h</div>
<div class="num" style="left:782px;top:627px;color:#0a0a1e;letter-spacing:-0.5px">28%</div>
<div class="num" style="left:782px;top:642px;color:#0a0a1e">10 h</div>
<div class="num" style="left:782px;top:657px;color:#0a0a1e">36 h</div>
<div class="num" style="left:830px;top:627px;color:#0a0a1e;letter-spacing:-0.5px">80%</div>
<div class="num" style="left:830px;top:642px;color:#0a0a1e">29 h</div>
<div class="num" style="left:830px;top:657px;color:#0a0a1e">36 h</div>
<div class="num" style="left:878px;top:627px;color:#fff;letter-spacing:-0.5px;-webkit-text-stroke:0">106%</div>
<div class="num" style="left:878px;top:642px;color:#0a0a1e">38 h</div>
<div class="num" style="left:878px;top:657px;color:#0a0a1e">36 h</div>
<div class="num" style="left:497px;top:757px;color:#0a0a1e;letter-spacing:-0.5px">0%</div>
<div class="num" style="left:497px;top:787px;color:#0a0a1e">36 h</div>
<div class="num" style="left:544px;top:757px;color:#0a0a1e;letter-spacing:-0.5px">0%</div>
<div class="num" style="left:544px;top:787px;color:#0a0a1e">36 h</div>
<div class="num" style="left:592px;top:757px;color:#0a0a1e;letter-spacing:-0.5px">40%</div>
<div class="num" style="left:592px;top:772px;color:#0a0a1e">14 h</div>
<div class="num" style="left:592px;top:787px;color:#0a0a1e">36 h</div>
<div class="num" style="left:639px;top:757px;color:#0a0a1e;letter-spacing:-0.5px">29%</div>
<div class="num" style="left:639px;top:772px;color:#0a0a1e">11 h</div>
<div class="num" style="left:639px;top:787px;color:#0a0a1e">36 h</div>
<div class="num" style="left:687px;top:757px;color:#0a0a1e;letter-spacing:-0.5px">0%</div>
<div class="num" style="left:687px;top:787px;color:#0a0a1e">36 h</div>
<div class="num" style="left:735px;top:757px;color:#0a0a1e;letter-spacing:-0.5px">0%</div>
<div class="num" style="left:735px;top:787px;color:#0a0a1e">36 h</div>
<div class="num" style="left:782px;top:757px;color:#0a0a1e;letter-spacing:-0.5px">0%</div>
<div class="num" style="left:782px;top:787px;color:#0a0a1e">36 h</div>
<div class="num" style="left:830px;top:757px;color:#0a0a1e;letter-spacing:-0.5px">0%</div>
<div class="num" style="left:830px;top:787px;color:#0a0a1e">36 h</div>
<div class="num" style="left:878px;top:757px;color:#0a0a1e;letter-spacing:-0.5px">0%</div>
<div class="num" style="left:878px;top:787px;color:#0a0a1e">36 h</div>
</body></html>
